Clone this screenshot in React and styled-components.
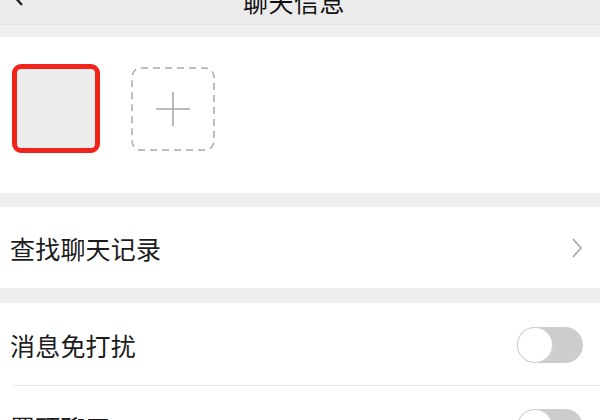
import React from "react";
import styled, { createGlobalStyle } from "styled-components";

const GlobalStyle = createGlobalStyle`
  html, body {
    margin: 0;
    padding: 0;
    background: #ededed;
    font-family: "Noto Sans CJK SC", "Noto Sans", sans-serif;
    overflow: hidden;
  }
`;

const Page = styled.div`
  width: 600px;
  height: 420px;
  overflow: hidden;
  background: #efefef;
`;

const NavBar = styled.div`
  height: 24px;
  background: #ececec;
  border-bottom: 1px solid #e3e3e3;
  display: flex;
  align-items: flex-end;
  justify-content: center;
  overflow: hidden;
  position: relative;
`;

const Title = styled.div`
  font-size: 25px;
  line-height: 25px;
  color: #111;
  margin-bottom: 10px;
  margin-left: -12px;
  letter-spacing: 0.5px;
`;

const Back = styled.svg`
  position: absolute;
  left: 10px;
  top: -14px;
`;

const Card = styled.div`
  background: #fff;
  margin-top: ${(p) => p.$gap}px;
`;

const Members = styled(Card)`
  height: 156px;
  padding: 27px 0 0 12px;
  box-sizing: border-box;
  display: flex;
  align-items: flex-start;
  gap: 31px;
`;

const Avatar = styled.div`
  width: 78px;
  height: 79px;
  background: #ececec;
  border: 5px solid #f2231b;
  border-radius: 9px;
`;

const AddTile = styled.svg`
  display: block;
  margin-top: 3px;
`;

const Row = styled.div`
  height: ${(p) => p.$h}px;
  display: flex;
  align-items: center;
  justify-content: space-between;
  padding: 0 17px 0 10px;
  box-sizing: border-box;
  position: relative;
  ${(p) =>
    p.$divider &&
    `
    &::after {
      content: "";
      position: absolute;
      left: 13px;
      right: 0;
      bottom: 0;
      height: 1px;
      background: #e6e6e6;
    }
  `}
`;

const Label = styled.span`
  font-size: 25px;
  color: #1b1b1b;
  letter-spacing: 0.2px;
`;

const Toggle = styled.div`
  width: 66px;
  height: 36px;
  border-radius: 18px;
  background: #cdcdcd;
  position: relative;
`;

const Knob = styled.div`
  position: absolute;
  left: 0;
  top: 0;
  width: 34px;
  height: 34px;
  border-radius: 50%;
  background: #fff;
  border: 1px solid #d2d2d2;
`;

const Switch = () => (
  <Toggle>
    <Knob />
  </Toggle>
);

export default function App() {
  return (
    <Page>
      <GlobalStyle />
      <NavBar>
        <Back width="16" height="20" viewBox="0 0 16 20">
          <path d="M12 1 L4 10 L12 19" fill="none" stroke="#222" strokeWidth="2.4" />
        </Back>
        <Title>聊天信息</Title>
      </NavBar>
      <Members $gap={12}>
        <Avatar />
        <AddTile width="84" height="84" viewBox="0 0 84 84">
          <rect
            x="1"
            y="1"
            width="82"
            height="82"
            rx="9"
            fill="none"
            stroke="#a8a8a8"
            strokeWidth="1.5"
            strokeDasharray="7 5"
          />
          <path d="M42 25 V59 M25 42 H59" stroke="#a8a8a8" strokeWidth="1.6" />
        </AddTile>
      </Members>
      <Card $gap={14}>
        <Row $h={81}>
          <Label>查找聊天记录</Label>
          <svg width="12" height="20" viewBox="0 0 12 20">
            <path d="M2 1 L10 10 L2 19" fill="none" stroke="#a6a6a6" strokeWidth="1.6" />
          </svg>
        </Row>
      </Card>
      <Card $gap={15}>
        <Row $h={83} $divider>
          <Label>消息免打扰</Label>
          <Switch />
        </Row>
        <Row $h={82} $divider>
          <Label>置顶聊天</Label>
          <Switch />
        </Row>
      </Card>
    </Page>
  );
}
